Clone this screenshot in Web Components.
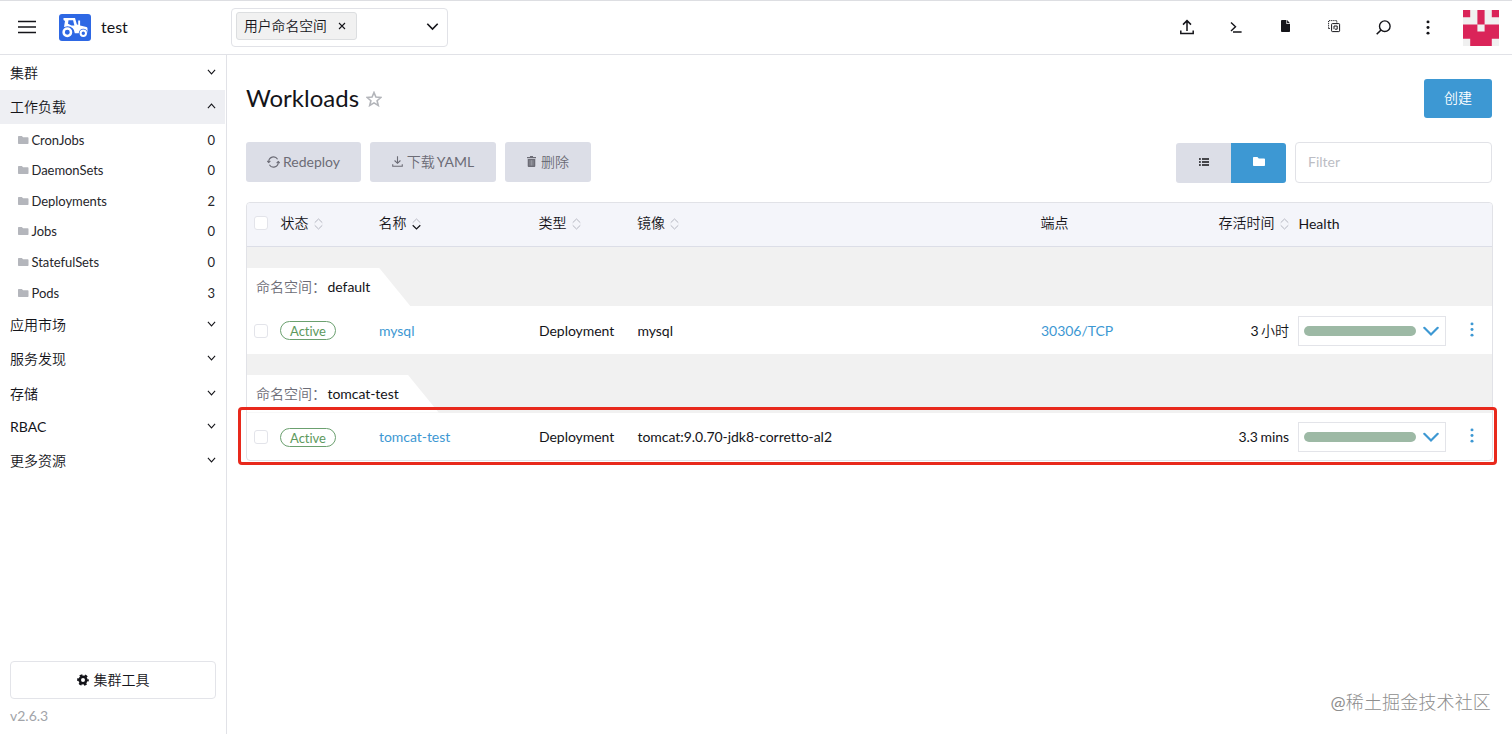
<!DOCTYPE html>
<html lang="zh">
<head>
<meta charset="utf-8">
<title>Workloads</title>
<style>
  html, body {
    margin: 0;
    height: 100%;
  }

  body {
    overflow: hidden;
    background: #fff;
    color: #141419;
    font: 14px/20px Lato, "Noto Sans CJK SC DemiLight", "Noto Sans CJK SC", sans-serif;
  }
</style>
</head>
<body>
<app-shell>
  <top-bar slot="top" name="test" filter="用户命名空间"></top-bar>

  <side-nav slot="side" version="v2.6.3" tools="集群工具">
    <nav-group label="集群" h="35"></nav-group>
    <nav-group label="工作负载" h="34" open>
      <nav-item label="CronJobs" count="0"></nav-item>
      <nav-item label="DaemonSets" count="0"></nav-item>
      <nav-item label="Deployments" count="2"></nav-item>
      <nav-item label="Jobs" count="0"></nav-item>
      <nav-item label="StatefulSets" count="0"></nav-item>
      <nav-item label="Pods" count="3"></nav-item>
    </nav-group>
    <nav-group label="应用市场" h="34"></nav-group>
    <nav-group label="服务发现" h="35"></nav-group>
    <nav-group label="存储" h="34"></nav-group>
    <nav-group label="RBAC" h="33"></nav-group>
    <nav-group label="更多资源" h="34"></nav-group>
  </side-nav>

  <page-title create="创建">Workloads</page-title>
  <table-tools></table-tools>
  <work-table>
    <ns-group label="命名空间：" name="default">
      <work-row name="mysql" type="Deployment" image="mysql" endpoint="30306/TCP" age="3 小时"></work-row>
    </ns-group>
    <ns-group label="命名空间：" name="tomcat-test">
      <work-row name="tomcat-test" type="Deployment" image="tomcat:9.0.70-jdk8-corretto-al2" age="3.3 mins" marked></work-row>
    </ns-group>
  </work-table>
</app-shell>

<script>
const ICONS = {
  menu: ['0 0 18 14', '<path d="M0 1.5h18M0 7h18M0 12.5h18" stroke="currentColor" stroke-width="1.7"/>'],
  down: ['0 0 12 12', '<path d="M1.2 3.5 6 8.3l4.8-4.8" fill="none" stroke="currentColor" stroke-width="1.5"/>'],
  up: ['0 0 12 12', '<path d="M1.2 8.5 6 3.7l4.8 4.8" fill="none" stroke="currentColor" stroke-width="1.5"/>'],
  chevron: ['0 0 16 16', '<path d="m1.3 4.8 6.7 6.7 6.7-6.7" fill="none" stroke="currentColor" stroke-width="2.2" stroke-linecap="round"/>'],
  close: ['0 0 8 8', '<path d="m1 1 6 6M7 1 1 7" stroke="currentColor" stroke-width="1.1"/>'],
  upload: ['0 0 14 16', '<path d="M7 12V2M3 5.6 7 1.6l4 4M.8 11.5v3h12.4v-3" fill="none" stroke="currentColor" stroke-width="1.5"/>'],
  shell: ['0 0 12 12', '<path d="M1 1.5 5.5 5.8 1 10M3 11h8.6" fill="none" stroke="currentColor" stroke-width="1.4"/>'],
  file: ['0 0 10 12', '<path d="M1 0h5v4h4v7.2a.8.8 0 0 1-.8.8H1a1 1 0 0 1-1-1V1a1 1 0 0 1 1-1zM6.8 0 10 3.2H6.8z" fill="currentColor"/>'],
  copy: ['0 0 13 13', '<g fill="none" stroke="currentColor"><path d="M.6 8.5V.6h8.2v2" stroke-dasharray="1.2 .9"/><path d="M.6 8.5h2" stroke-dasharray="1.2 .9"/><rect x="3.6" y="3.6" width="8" height="8" rx=".8"/><path d="M6 9.2V6h3.2v3.2H7"/></g>'],
  search: ['0 0 15 15', '<circle cx="8.8" cy="6.2" r="5.3" fill="none" stroke="currentColor" stroke-width="1.4"/><path d="M5 10 .7 14.3" stroke="currentColor" stroke-width="1.6"/>'],
  dots: ['0 0 4 16', '<g fill="currentColor"><circle cx="2" cy="2" r="1.5"/><circle cx="2" cy="8" r="1.5"/><circle cx="2" cy="14" r="1.5"/></g>'],
  folder: ['0 0 12 9', '<path d="M.8 0h3.6l1.4 1.4h5.4a.8.8 0 0 1 .8.8v6a.8.8 0 0 1-.8.8H.8a.8.8 0 0 1-.8-.8V.8A.8.8 0 0 1 .8 0z" fill="currentColor"/>'],
  list: ['0 0 10 8', '<path d="M0 1h1.8M0 4h1.8M0 7h1.8M3 1h7M3 4h7M3 7h7" stroke="currentColor" stroke-width="1.4"/>'],
  star: ['0 0 16 16', '<path d="m8 1.5 1.9 4.6 5 .4-3.8 3.2 1.2 4.8L8 11.9l-4.300 2.600 1.200-4.800L1.100 6.500l5-.4z" fill="none" stroke="currentColor" stroke-width="1.6"/>'],
  refresh: ['0 0 14 12', '<g fill="none" stroke="currentColor" stroke-width="1.2"><path d="M1.800 6.200a5.200 5.200 0 0 1 9.600-2.900M12.200 5.800a5.200 5.200 0 0 1-9.600 2.900"/><path d="m.3 5 1.500 1.500L3.600 5M13.700 7l-1.500-1.500L10.400 7"/></g>'],
  download: ['0 0 12 12', '<path d="M6 .3v7.500M2.800 4.900 6 8l3.200-3.100M.8 9v2.200h10.400V9" fill="none" stroke="currentColor" stroke-width="1.2"/>'],
  trash: ['0 0 10 12', '<path d="M3.300 0h3.400v1.200H10v1.300H0V1.200h3.300zM.8 3.200h8.400V11a1 1 0 0 1-1 1H1.800a1 1 0 0 1-1-1z" fill="currentColor"/><path d="M3.400 4.500v6M5 4.500v6M6.600 4.500v6" stroke="#dcdee7" stroke-width=".4"/>'],
  sort: ['0 0 9 12', '<path d="M.7 4.700 4.500 1l3.800 3.700M.7 7.300 4.500 11l3.800-3.700" fill="none" stroke="#b4b6c0"/>'],
  sorted: ['0 0 9 12', '<path d="M.7 4.700 4.500 1l3.800 3.700" fill="none" stroke="#b4b6c0"/><path d="M.7 7.300 4.500 11l3.800-3.700" fill="none" stroke="currentColor" stroke-width="1.2"/>'],
  gear: ['0 0 12 12', '<circle cx="6" cy="6" r="3.3" fill="none" stroke="currentColor" stroke-width="2.6"/><circle cx="6" cy="6" r="4.9" fill="none" stroke="currentColor" stroke-width="1.9" stroke-dasharray="2.7 2.43" stroke-dashoffset="1.35"/>'],
  tractor: ['0 0 32 27', `
    <rect width="32" height="27" rx="3" fill="#2e68e4"/>
    <path d="M4.500 4h11.500l1.800 6.300 1.400.6V6.500h1.900v5l6.300 1.500q1.100.4 1.100 1.600v4.600H15.800q-.6-6.500-7.300-6.900l-3.500.8 1-6-1.500-1z" fill="#fff"/>
    <path d="M9.500 6.300h4.600l1.300 5.200h-2.900L9 9.800z" fill="#2e68e4"/>
    <circle cx="8.300" cy="18.300" r="3.700" fill="#2e68e4" stroke="#fff" stroke-width="2.500"/>
    <circle cx="24.300" cy="19.200" r="4.500" fill="#2e68e4"/>
    <circle cx="24.300" cy="19.200" r="2.700" fill="#2e68e4" stroke="#fff" stroke-width="2"/>
  `],
  avatar: ['0 0 5 5', '<path d="M0 0h5v5H0z" fill="#f0f0f0"/><path d="M0 0h1v1H0zM2 0h1v2H2zM4 0h1v1H4zM0 2h2v1h1V2h2v2H4v1H1V4H0z" fill="#da2459"/>']
};

class Base extends HTMLElement {
  constructor(){
    super();
    this.attachShadow({mode:'open'});
  }

  connectedCallback(){
    this.render();
  }

  attr(name){
    return this.getAttribute(name) || '';
  }

  render(){
    this.shadowRoot.innerHTML = `
      <style>${this.style_()}</style>
      ${this.html()}
    `;
  }
}

customElements.define('ui-icon',
class extends Base {
  style_(){
    return `
    :host { display:block; flex:none; width:${this.attr('w')}px; height:${this.attr('h')}px; }
    svg { display:block; width:100%; height:100%; }
    `;
  }

  html(){
    const [box, body] = ICONS[this.attr('name')];
    return `<svg viewBox="${box}" preserveAspectRatio="none">${body}</svg>`;
  }
});

customElements.define('app-shell',
class extends Base {
  style_(){
    return `
    :host {
      display:grid;
      grid-template:55px 1fr / 227px 1fr;
      height:100vh;
      position:relative;
    }
    .top { grid-column:1 / 3; }
    main { padding:24px 19px 0 19px; min-width:0; }
    .mark {
      position:absolute;
      right:21px;
      bottom:20px;
      font-size:18px;
      line-height:24px;
      font-family:Lato, "Noto Sans CJK SC Light", "Noto Sans CJK SC", sans-serif;
      letter-spacing:.15px;
      color:#8e8e8e;
    }
    `;
  }

  html(){
    return `
    <div class="top"><slot name="top"></slot></div>
    <slot name="side"></slot>
    <main><slot></slot></main>
    <div class="mark">@稀土掘金技术社区</div>
    `;
  }
});

customElements.define('top-bar',
class extends Base {
  style_(){
    return `
    :host {
      display:flex;
      align-items:center;
      box-sizing:border-box;
      height:55px;
      border-top:1px solid #dddee2;
      border-bottom:1px solid #e1e2e7;
      padding:0 13px 1px 18px;
    }
    .name { margin-left:10px; width:130px; font-size:16px; }
    .select {
      box-sizing:border-box;
      display:flex;
      align-items:center;
      justify-content:space-between;
      width:217px;
      height:39px;
      padding:0 8px 2px 4px;
      border:1px solid #e1e2e7;
      border-radius:4px;
    }
    .chip {
      box-sizing:border-box;
      display:flex;
      align-items:center;
      gap:11px;
      height:28px;
      padding:0 10px 1px 7px;
      border:1px solid #dcdee0;
      border-radius:3px;
      background:#f1f1f1;
      font-size:13.8px;
    }
    .actions { display:flex; align-items:center; margin-left:auto; }
    .actions span { width:49.2px; display:flex; justify-content:center; }
    .actions span:nth-child(6) { width:39.5px; }
    .actions span:nth-child(3), .actions span:nth-child(4) { margin-bottom:2px; }
    ui-icon[name=tractor] { margin-left:23px; }
    ui-icon[name=avatar] { margin:1px 0 0 15px; }
    `;
  }

  html(){
    const icons = [['upload',14,16],['shell',12,12],['file',9,12],['copy',13,13],['search',15,15],['dots',4,15]];
    return `
    <ui-icon name="menu" w="18" h="14"></ui-icon>
    <ui-icon name="tractor" w="32" h="27"></ui-icon>
    <div class="name">${this.attr('name')}</div>
    <div class="select">
      <div class="chip">${this.attr('filter')}<ui-icon name="close" w="8" h="8"></ui-icon></div>
      <ui-icon name="down" w="13" h="13"></ui-icon>
    </div>
    <div class="actions">
      ${icons.map(([n, w, h]) => `<span><ui-icon name="${n}" w="${w}" h="${h}"></ui-icon></span>`).join('')}
      <ui-icon name="avatar" w="36" h="36"></ui-icon>
    </div>
    `;
  }
});

customElements.define('side-nav',
class extends Base {
  style_(){
    return `
    :host {
      display:flex;
      flex-direction:column;
      box-sizing:border-box;
      border-right:1px solid #e1e2e7;
    }
    .foot { margin-top:auto; padding:0 10px 8px; }
    .tools {
      box-sizing:border-box;
      display:flex;
      align-items:center;
      justify-content:center;
      gap:5px;
      height:38px;
      border:1px solid #e3e4e9;
      border-radius:4px;
    }
    .version { margin-top:7px; color:#a2a4a9; }
    `;
  }

  html(){
    return `
    <slot></slot>
    <div class="foot">
      <div class="tools"><ui-icon name="gear" w="12" h="12"></ui-icon>${this.attr('tools')}</div>
      <div class="version">${this.attr('version')}</div>
    </div>
    `;
  }
});

customElements.define('nav-group',
class extends Base {
  style_(){
    return `
    :host { display:block; }
    .head {
      display:flex;
      align-items:center;
      justify-content:space-between;
      height:${this.attr('h')}px;
      margin-right:1px;
      padding:0 9px 0 10px;
    }
    :host([open]) .head { background:#eeeff3; }
    :host([open]) .items { padding-top:.3px; }
    ui-icon { margin-bottom:2px; }
    `;
  }

  html(){
    return `
    <div class="head">${this.attr('label')}<ui-icon name="${this.hasAttribute('open') ? 'up' : 'down'}" w="9" h="10"></ui-icon></div>
    <div class="items"><slot></slot></div>
    `;
  }
});

customElements.define('nav-item',
class extends Base {
  style_(){
    return `
    :host {
      display:flex;
      align-items:center;
      height:30.6px;
      padding:0 11px 0 18px;
      font-size:13px;
      letter-spacing:-.05px;
      color:#26262b;
    }
    .label { margin-left:3px; flex:1; }
    ui-icon { color:#b4b6bc; }
    `;
  }

  html(){
    return `
    <ui-icon name="folder" w="10.5" h="8"></ui-icon>
    <span class="label">${this.attr('label')}</span>
    <span>${this.attr('count')}</span>
    `;
  }
});

customElements.define('page-title',
class extends Base {
  style_(){
    return `
    :host { display:flex; align-items:center; height:39px; }
    h1 { margin:0 7px 1px 0; font-size:24px; line-height:30px; font-weight:400; }
    ui-icon { color:#b3b5ba; margin-top:1px; }
    button {
      margin-left:auto;
      margin-right:1px;
      width:68px;
      height:39px;
      padding:0 0 1px;
      border:0;
      border-radius:3px;
      background:#3d98d3;
      color:#fff;
      font:inherit;
    }
    `;
  }

  html(){
    return `
    <h1><slot></slot></h1>
    <ui-icon name="star" w="16" h="16"></ui-icon>
    <button>${this.attr('create')}</button>
    `;
  }
});

customElements.define('table-tools',
class extends Base {
  style_(){
    return `
    :host { display:flex; align-items:center; height:41px; margin:24px 1px 19px 0; }
    button {
      display:flex;
      align-items:center;
      justify-content:center;
      height:40px;
      padding:0 0 2px;
      margin-right:9px;
      border:0;
      border-radius:3px;
      background:#dcdee7;
      color:#6c6c76;
      font:inherit;
    }
    button.act { margin-bottom:1px; padding-bottom:1px; }
    .view { display:flex; margin-left:auto; margin-right:9px; }
    .view button { width:55px; margin:0; color:#141419; border-radius:3px 0 0 3px; }
    .view button + button { background:#3d98d3; color:#fff; border-radius:0 3px 3px 0; }
    input {
      box-sizing:border-box;
      width:197px;
      height:41px;
      padding:0 12px 2px;
      border:1px solid #e1e2e7;
      border-radius:4px;
      font:inherit;
      outline:0;
    }
    input::placeholder { color:#bcbdc4; }
    `;
  }

  html(){
    return `
    <button class="act" style="width:115px;gap:3px"><ui-icon name="refresh" w="13" h="12"></ui-icon>Redeploy</button>
    <button class="act" style="width:126px;gap:4px;word-spacing:-1.5px"><ui-icon name="download" w="11" h="11"></ui-icon>下载 YAML</button>
    <button class="act" style="width:86px;gap:5px"><ui-icon name="trash" w="9" h="11"></ui-icon>删除</button>
    <div class="view">
      <button><ui-icon name="list" w="10" h="8"></ui-icon></button>
      <button><ui-icon name="folder" w="12" h="9"></ui-icon></button>
    </div>
    <input placeholder="Filter">
    `;
  }
});

const COLS = '34px 98px 160px 98.5px 403.5px 1fr 157px 46px';

customElements.define('work-table',
class extends Base {
  style_(){
    return `
    :host {
      display:block;
      box-sizing:border-box;
      height:259px;
      border:1px solid #e1e2e7;
      border-radius:4px;
    }
    .head {
      display:grid;
      grid-template-columns:${COLS};
      align-items:center;
      height:43px;
      border-bottom:1px solid #dcdee7;
      border-radius:4px 4px 0 0;
      background:#f4f5fa;
    }
    .head div { display:flex; align-items:center; gap:5px; margin-left:-.5px; padding-bottom:3px; }
    .head div ui-icon { margin-top:1px; }
    .head .health { padding:0 0 1px 10px; }
    check-box { margin:0 0 3px 7px; }
    `;
  }

  html(){
    const sort = (label, name = 'sort') => `${label}<ui-icon name="${name}" w="9" h="12"></ui-icon>`;
    return `
    <div class="head">
      <check-box></check-box>
      <div>${sort('状态')}</div>
      <div>${sort('名称', 'sorted')}</div>
      <div>${sort('类型')}</div>
      <div>${sort('镜像')}</div>
      <div style="grid-column:6;margin-right:.5px"><span style="flex:1">端点</span>${sort('存活时间')}</div>
      <div class="health">Health</div>
    </div>
    <slot></slot>
    `;
  }
});

customElements.define('check-box',
class extends Base {
  style_(){
    return `
    :host {
      display:block;
      box-sizing:border-box;
      width:14px;
      height:14px;
      border:1px solid #e3e4ea;
      border-radius:3px;
      background:#fff;
    }
    `;
  }

  html(){
    return '';
  }
});

customElements.define('ns-group',
class extends Base {
  style_(){
    return `
    :host { display:block; }
    .band { display:flex; height:38px; padding-top:21px; background:#f1f1f1; }
    .tab {
      display:flex;
      align-items:center;
      padding:0 40px 0 9px;
      background:#fff;
      clip-path:polygon(0 0, calc(100% - 31px) 0, 100% 100%, 0 100%);
    }
    .label { width:71.5px; color:#6c6c76; }
    .name { letter-spacing:-.05px; }
    `;
  }

  html(){
    return `
    <div class="band">
      <div class="tab"><span class="label">${this.attr('label')}</span><span class="name">${this.attr('name')}</span></div>
    </div>
    <slot></slot>
    `;
  }
});

customElements.define('work-row',
class extends Base {
  style_(){
    return `
    :host {
      display:grid;
      grid-template-columns:${COLS};
      align-items:center;
      box-sizing:border-box;
      height:47.5px;
      padding-top:1.5px;
      position:relative;
      letter-spacing:-.04px;
    }
    check-box { margin-left:7px; }
    .state {
      box-sizing:border-box;
      justify-self:start;
      width:56px;
      height:19px;
      margin-left:-1px;
      border:1px solid #6ba06f;
      border-radius:10px;
      color:#5d995d;
      font-size:13px;
      line-height:18px;
      text-align:center;
    }
    .link { color:#3d98d3; }
    .end { display:flex; justify-content:space-between; word-spacing:-1px; }
    .health {
      box-sizing:border-box;
      display:flex;
      align-items:center;
      justify-content:space-between;
      height:30px;
      margin-left:9px;
      padding:0 6px 0 5px;
      border:1px solid #e3e4e9;
      color:#3d98d3;
    }
    .bar { width:112px; height:10px; border-radius:5px; background:#9db9a5; }
    .more { justify-self:center; color:#3d98d3; margin:0 0 3px 6px; }
    /* callout frame drawn over the row and the table edge */
    .frame {
      position:absolute;
      inset:-6px -5px -5px -9px;
      border:3px solid #e8291c;
      border-radius:4px;
    }
    `;
  }

  html(){
    return `
    <check-box></check-box>
    <span class="state">Active</span>
    <span class="link">${this.attr('name')}</span>
    <span>${this.attr('type')}</span>
    <span>${this.attr('image')}</span>
    <div class="end"><span class="link">${this.attr('endpoint')}</span><span>${this.attr('age')}</span></div>
    <div class="health"><div class="bar"></div><ui-icon name="chevron" w="16" h="16"></ui-icon></div>
    <ui-icon class="more" name="dots" w="4" h="15"></ui-icon>
    ${this.hasAttribute('marked') ? '<div class="frame"></div>' : ''}
    `;
  }
});
</script>
</body>
</html>
